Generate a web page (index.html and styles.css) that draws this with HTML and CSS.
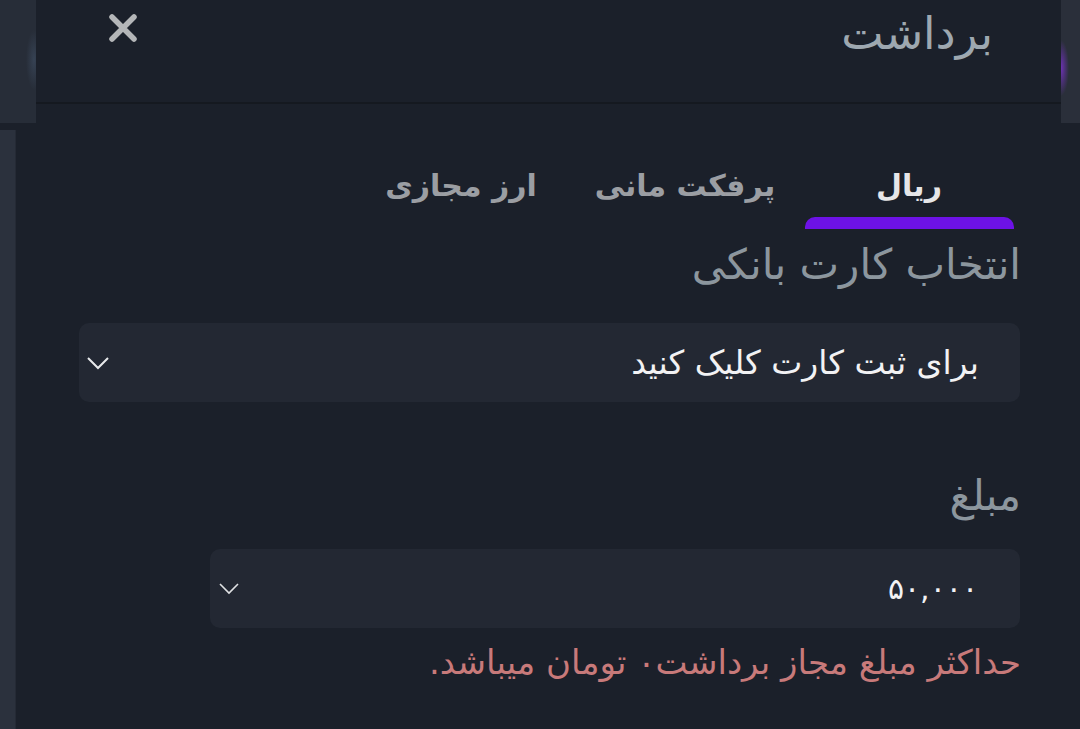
FILE: index.html
```html
<!DOCTYPE html>
<html lang="fa" dir="rtl">
<head>
<meta charset="utf-8">
<title>برداشت</title>
<link rel="stylesheet" href="styles.css">
</head>
<body>
<div class="screen">
  <div class="top-row">
    <div class="strip strip-right"></div>
    <div class="top-mid">
      <header class="sheet-header">
        <h1 class="title">برداشت</h1>
        <button class="close" aria-label="بستن">
          <svg width="30" height="30" viewBox="0 0 30 30"><path d="M4 4 L26 26 M26 4 L4 26" stroke="#b4b6b8" stroke-width="5.5" stroke-linecap="round" fill="none"/></svg>
        </button>
      </header>
    </div>
    <div class="strip strip-left"></div>
  </div>
  <div class="bottom-row">
    <main class="content">
      <nav class="tabs">
        <div class="tab active"><span class="tab-label">ریال</span><span class="tab-bar"></span></div>
        <div class="tab"><span class="tab-label">پرفکت مانی</span><span class="tab-bar"></span></div>
        <div class="tab"><span class="tab-label">ارز مجازی</span><span class="tab-bar"></span></div>
      </nav>
      <label class="field-label label-card">انتخاب کارت بانکی</label>
      <div class="select select-card">
        <span class="select-text">برای ثبت کارت کلیک کنید</span>
        <svg class="chev" width="24" height="14" viewBox="0 0 24 14"><path d="M2 2 L12 12 L22 2" stroke="#e8eaec" stroke-width="2" fill="none" stroke-linejoin="miter"/></svg>
      </div>
      <label class="field-label label-amount">مبلغ</label>
      <div class="select select-amount">
        <span class="select-text amount">۵۰,۰۰۰</span>
        <svg class="chev" width="22" height="13" viewBox="0 0 22 13"><path d="M2 2 L11 11 L20 2" stroke="#e0e2e4" stroke-width="1.6" fill="none"/></svg>
      </div>
      <p class="error">حداکثر مبلغ مجاز برداشت۰ تومان میباشد.</p>
    </main>
    <div class="strip strip-low"></div>
  </div>
</div>
</body>
</html>
```
FILE: styles.css
```css
html, body {
  margin: 0;
  padding: 0;
  background: #1b202a;
}
body {
  width: 1080px;
  height: 729px;
  overflow: hidden;
  font-family: "DejaVu Sans", "Noto Sans", sans-serif;
}
.screen {
  width: 1080px;
  height: 729px;
  display: flex;
  flex-direction: column;
}
.top-row {
  height: 123px;
  display: flex;
  flex-direction: row;
}
.strip {
  background: #2a303b;
}
.strip-left {
  width: 36px;
  background:
    radial-gradient(ellipse 8px 30px at 34px 60px, rgba(64,80,102,0.6), rgba(64,80,102,0) 100%),
    #272d38;
}
.strip-right {
  width: 19px;
  background:
    radial-gradient(ellipse 8px 28px at 0px 68px, rgba(120,50,200,0.85), rgba(120,50,200,0) 100%),
    #2a2f3a;
}
.top-mid {
  flex: 1;
  background: #1b202a;
}
.sheet-header {
  height: 102px;
  border-bottom: 2px solid #151920;
  display: flex;
  flex-direction: row;
  justify-content: space-between;
  align-items: flex-start;
  padding: 0 68px 0 72px;
}
.title {
  margin: 4px 0 0 0;
  font-size: 45px;
  font-weight: normal;
  line-height: 60px;
  color: #9ea8b0;
}
.close {
  margin: 13px 0 0 0;
  padding: 0;
  border: 0;
  background: none;
  width: 30px;
  height: 30px;
  display: block;
}
.close svg { display: block; }

.bottom-row {
  flex: 1;
  display: flex;
  flex-direction: row;
}
.strip-low {
  width: 15px;
  margin-top: 7px;
  background: #2b313d;
  border-right: 1px solid #252a35;
}
.content {
  flex: 1;
  padding: 0 60px 0 63px;
  display: flex;
  flex-direction: column;
  align-items: stretch;
}
.tabs {
  margin-top: 40px;
  display: flex;
  flex-direction: row;
  margin-right: -1px;
}
.tab {
  width: 224px;
  display: flex;
  flex-direction: column;
  align-items: center;
}
.tab-label {
  font-size: 30px;
  line-height: 46px;
  font-weight: bold;
  color: #9b9ea3;
}
.tab.active .tab-label {
  color: #e6e6e8;
}
.tab-bar {
  margin-top: 8px;
  width: 209px;
  height: 12px;
  border-radius: 10px 10px 0 0;
  background: transparent;
}
.tab.active .tab-bar {
  background: #6d12e6;
}
.field-label {
  display: block;
  font-size: 42px;
  line-height: 56px;
  color: #8c969e;
  margin-right: -1px;
}
.label-card {
  margin-top: 8px;
}
.select {
  background: #232833;
  border-radius: 10px;
  height: 79px;
  display: flex;
  flex-direction: row;
  justify-content: space-between;
  align-items: center;
  box-sizing: border-box;
}
.select-card {
  margin-top: 30px;
  padding: 0 41px 0 7px;
}
.select-amount {
  margin-left: 131px;
  margin-top: 25px;
  padding: 0 42px 0 8px;
}
.select-text {
  font-size: 33px;
  line-height: 44px;
  color: #f2f2f4;
}
.select-text.amount {
  font-size: 30px;
}
.chev { display: block; }
.label-amount {
  margin-top: 66px;
}
.error {
  margin: 10px -1px 0 0;
  font-size: 34px;
  line-height: 48px;
  color: #c87a7a;
}
```
